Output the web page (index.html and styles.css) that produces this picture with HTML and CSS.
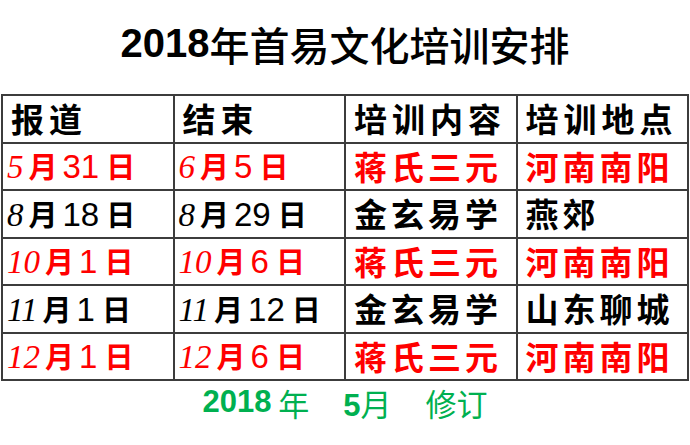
FILE: index.html
```html
<!DOCTYPE html>
<html lang="zh">
<head>
<meta charset="utf-8">
<link rel="stylesheet" href="styles.css">
</head>
<body>
<h1 class="title"><span class="tnum">2018</span>年首易文化培训安排</h1>
<table class="sched">
  <tr class="head">
    <td>报道</td><td>结束</td><td>培训内容</td><td>培训地点</td>
  </tr>
  <tr class="red">
    <td class="date"><span class="m">5</span><span class="cj">月</span><span class="d">31</span><span class="cj">日</span></td>
    <td class="date"><span class="m">6</span><span class="cj">月</span><span class="d">5</span><span class="cj">日</span></td>
    <td class="txt">蒋氏三元</td>
    <td class="txt">河南南阳</td>
  </tr>
  <tr>
    <td class="date"><span class="m">8</span><span class="cj">月</span><span class="d">18</span><span class="cj">日</span></td>
    <td class="date"><span class="m">8</span><span class="cj">月</span><span class="d">29</span><span class="cj">日</span></td>
    <td class="txt">金玄易学</td>
    <td class="txt">燕郊</td>
  </tr>
  <tr class="red">
    <td class="date"><span class="m">10</span><span class="cj">月</span><span class="d">1</span><span class="cj">日</span></td>
    <td class="date"><span class="m">10</span><span class="cj">月</span><span class="d">6</span><span class="cj">日</span></td>
    <td class="txt">蒋氏三元</td>
    <td class="txt">河南南阳</td>
  </tr>
  <tr>
    <td class="date"><span class="m">11</span><span class="cj">月</span><span class="d">1</span><span class="cj">日</span></td>
    <td class="date"><span class="m">11</span><span class="cj">月</span><span class="d">12</span><span class="cj">日</span></td>
    <td class="txt">金玄易学</td>
    <td class="txt">山东聊城</td>
  </tr>
  <tr class="red">
    <td class="date"><span class="m">12</span><span class="cj">月</span><span class="d">1</span><span class="cj">日</span></td>
    <td class="date"><span class="m">12</span><span class="cj">月</span><span class="d">6</span><span class="cj">日</span></td>
    <td class="txt">蒋氏三元</td>
    <td class="txt">河南南阳</td>
  </tr>
</table>
<p class="foot"><span class="fb">2018</span> 年<span class="fgap"><span class="fb">5</span>月</span><span class="fgap">修订</span></p>
</body>
</html>
```

FILE: styles.css
```css
html, body {
  margin: 0;
  padding: 0;
  background: #ffffff;
}
body {
  width: 690px;
  font-family: "Liberation Sans", "Noto Sans CJK SC", sans-serif;
  color: #000;
}
.title {
  margin: 0;
  height: 94px;
  display: flex;
  align-items: center;
  justify-content: center;
  padding-bottom: 7px;
  box-sizing: border-box;
  font-family: "Noto Sans CJK SC", sans-serif;
  font-size: 40px;
  font-weight: 500;
}
.tnum {
  font-family: "Liberation Sans", sans-serif;
  font-weight: 700;
}
.sched {
  margin-left: 1px;
  width: 688px;
  border-collapse: collapse;
  table-layout: fixed;
}
.sched td {
  border: 2px solid #3c3c3c;
  height: 47.5px;
  padding: 0 0 0 4px;
  box-sizing: border-box;
  white-space: nowrap;
  font-family: "Noto Sans CJK SC", sans-serif;
  font-weight: 700;
  font-size: 33px;
  line-height: 1;
  vertical-align: middle;
}
.head td {
  letter-spacing: 5px;
  padding-left: 8px;
}
.txt {
  letter-spacing: 4px;
}
.sched td.txt {
  padding-left: 8px;
}
.red td {
  color: #ff0000;
}
.date .m {
  font-family: "Liberation Serif", serif;
  font-style: italic;
  font-weight: 400;
  font-size: 33px;
  margin-right: 5px;
}
.date .cj {
  font-size: 29px;
}
.date .d {
  font-family: "Liberation Sans", sans-serif;
  font-weight: 400;
  font-size: 33px;
  margin: 0 7px 0 5px;
}
.foot {
  margin: 0;
  height: 42px;
  display: flex;
  align-items: center;
  justify-content: center;
  color: #00b050;
  font-family: "Noto Sans CJK SC", sans-serif;
  font-size: 31px;
  font-weight: 400;
  white-space: pre;
}
.fb {
  font-family: "Liberation Sans", sans-serif;
  font-weight: 700;
}
.fgap {
  margin-left: 34px;
}
```
